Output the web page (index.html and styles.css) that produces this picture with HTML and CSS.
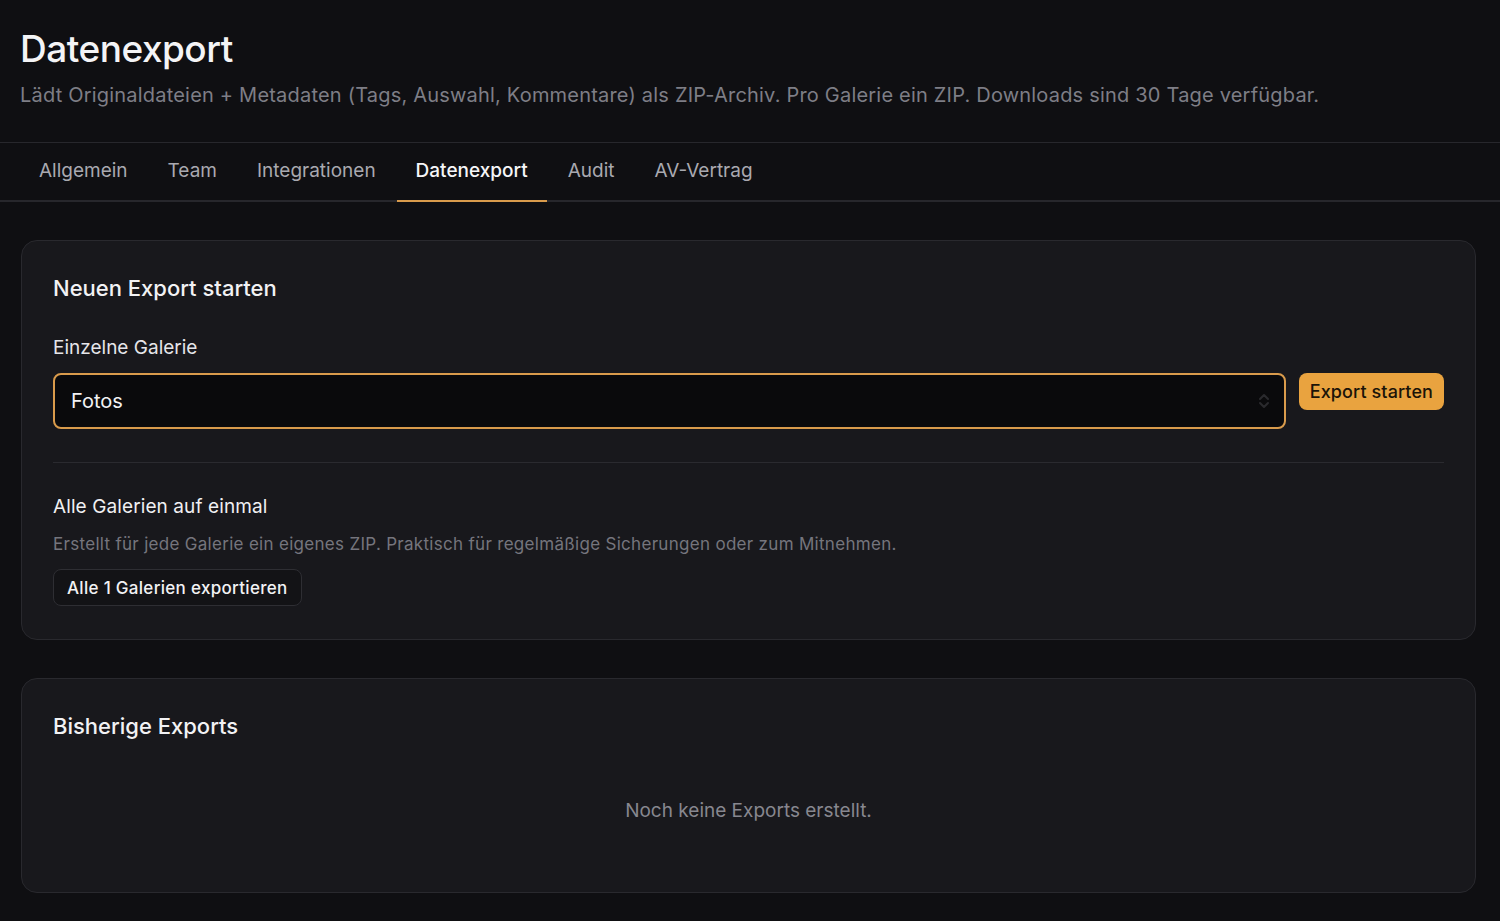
FILE: index.html
```html
<!DOCTYPE html>
<html lang="de">
<head>
    <meta charset="UTF-8">
    <meta name="viewport" content="width=device-width, initial-scale=1.0">
    <title>Datenexport</title>
    <link rel="stylesheet" href="styles.css">
</head>
<body>
    <header class="page-header">
        <h1>Datenexport</h1>
        <p class="subtitle">Lädt Originaldateien + Metadaten (Tags, Auswahl, Kommentare) als ZIP-Archiv. Pro Galerie ein ZIP. Downloads sind 30 Tage verfügbar.</p>
    </header>

    <!-- Settings tabs -->
    <nav class="tabs">
        <a class="tab">Allgemein</a>
        <a class="tab">Team</a>
        <a class="tab">Integrationen</a>
        <a class="tab active">Datenexport</a>
        <a class="tab">Audit</a>
        <a class="tab">AV-Vertrag</a>
    </nav>

    <main class="content">
        <section class="card">
            <h2>Neuen Export starten</h2>
            <label class="field-label" for="gallery-select">Einzelne Galerie</label>
            <div class="export-row">
                <div class="select-wrap">
                    <select id="gallery-select">
                        <option>Fotos</option>
                    </select>
                    <svg class="select-icon" width="12" height="16" viewBox="0 0 12 16" fill="none" stroke="#2a2a2e" stroke-width="2" stroke-linecap="round" stroke-linejoin="round">
                        <path d="M2 6l4-4 4 4"/>
                        <path d="M2 10l4 4 4-4"/>
                    </svg>
                </div>
                <button class="btn-primary" type="button">Export starten</button>
            </div>

            <hr class="divider">

            <h3>Alle Galerien auf einmal</h3>
            <p class="hint">Erstellt für jede Galerie ein eigenes ZIP. Praktisch für regelmäßige Sicherungen oder zum Mitnehmen.</p>
            <button class="btn-secondary" type="button">Alle 1 Galerien exportieren</button>
        </section>

        <section class="card history">
            <h2>Bisherige Exports</h2>
            <p class="empty">Noch keine Exports erstellt.</p>
        </section>
    </main>
</body>
</html>
```

FILE: styles.css
```css
* {
    box-sizing: border-box;
}
body {
    margin: 0;
    font-family: Inter, "Noto Sans", sans-serif;
    background-color: #0f0f12;
    color: #ededf0;
}
.page-header {
    padding: 26px 20px 33px;
    border-bottom: 1px solid #27272c;
}
h1 {
    margin: 0;
    font-size: 37px;
    line-height: 46px;
    font-weight: 500;
    letter-spacing: -0.5px;
    color: #f4f4f6;
}
.subtitle {
    margin: 9px 0 0;
    font-size: 20px;
    line-height: 28px;
    letter-spacing: 0.2px;
    color: #7e7e86;
}
.tabs {
    display: flex;
    gap: 2px;
    padding: 0 20px;
    border-bottom: 2px solid #27272c;
}
.tab {
    display: block;
    padding: 15px 19px 16px;
    font-size: 19px;
    line-height: 26px;
    color: #a9a9b0;
    border-bottom: 2px solid transparent;
    margin-bottom: -2px;
    cursor: pointer;
}
.tab.active {
    color: #f6f6f8;
    font-weight: 500;
    border-bottom-color: #d99b4c;
}
.content {
    padding: 38px 24px 30px 21px;
    display: flex;
    flex-direction: column;
    gap: 38px;
}
.card {
    background: #18181c;
    border: 1px solid #29292e;
    border-radius: 16px;
    padding: 32px 31px 33px;
}
h2 {
    margin: 0;
    font-size: 22px;
    line-height: 30px;
    font-weight: 500;
    color: #f2f2f4;
}
.field-label {
    display: block;
    margin-top: 32px;
    font-size: 19px;
    line-height: 26px;
    color: #e6e6ea;
}
.export-row {
    display: flex;
    align-items: flex-start;
    gap: 13px;
    margin-top: 12px;
}
.select-wrap {
    position: relative;
    flex: 1;
}
select {
    width: 100%;
    height: 56px;
    padding: 0 16px;
    appearance: none;
    background: #0a0a0c;
    border: 2px solid #d99b4c;
    border-radius: 8px;
    color: #f2f2f4;
    font-family: inherit;
    font-size: 20px;
}
.select-icon {
    position: absolute;
    right: 16px;
    top: 20px;
}
.btn-primary {
    height: 37px;
    padding: 0 11px;
    background: #e9a33f;
    color: #1b1408;
    border: none;
    border-radius: 8px;
    font-family: inherit;
    font-size: 18px;
    font-weight: 500;
    letter-spacing: 0.1px;
    cursor: pointer;
}
.divider {
    border: none;
    border-top: 1px solid #2a2a2f;
    margin: 33px 0 0;
}
h3 {
    margin: 31px 0 0;
    font-size: 19px;
    line-height: 26px;
    font-weight: 400;
    letter-spacing: 0.1px;
    color: #f0f0f2;
}
.hint {
    margin: 12px 0 0;
    font-size: 17px;
    line-height: 24px;
    letter-spacing: 0.3px;
    color: #75757d;
}
.btn-secondary {
    display: block;
    margin-top: 13px;
    height: 37px;
    padding: 0 13px;
    background: #131316;
    color: #f2f2f4;
    border: 1px solid #2e2e33;
    border-radius: 8px;
    font-family: inherit;
    font-size: 17px;
    font-weight: 500;
    letter-spacing: 0.3px;
    cursor: pointer;
}
.history {
    padding-bottom: 68px;
}
.empty {
    margin: 57px 0 0;
    text-align: center;
    font-size: 19px;
    line-height: 26px;
    color: #87878f;
}
```
